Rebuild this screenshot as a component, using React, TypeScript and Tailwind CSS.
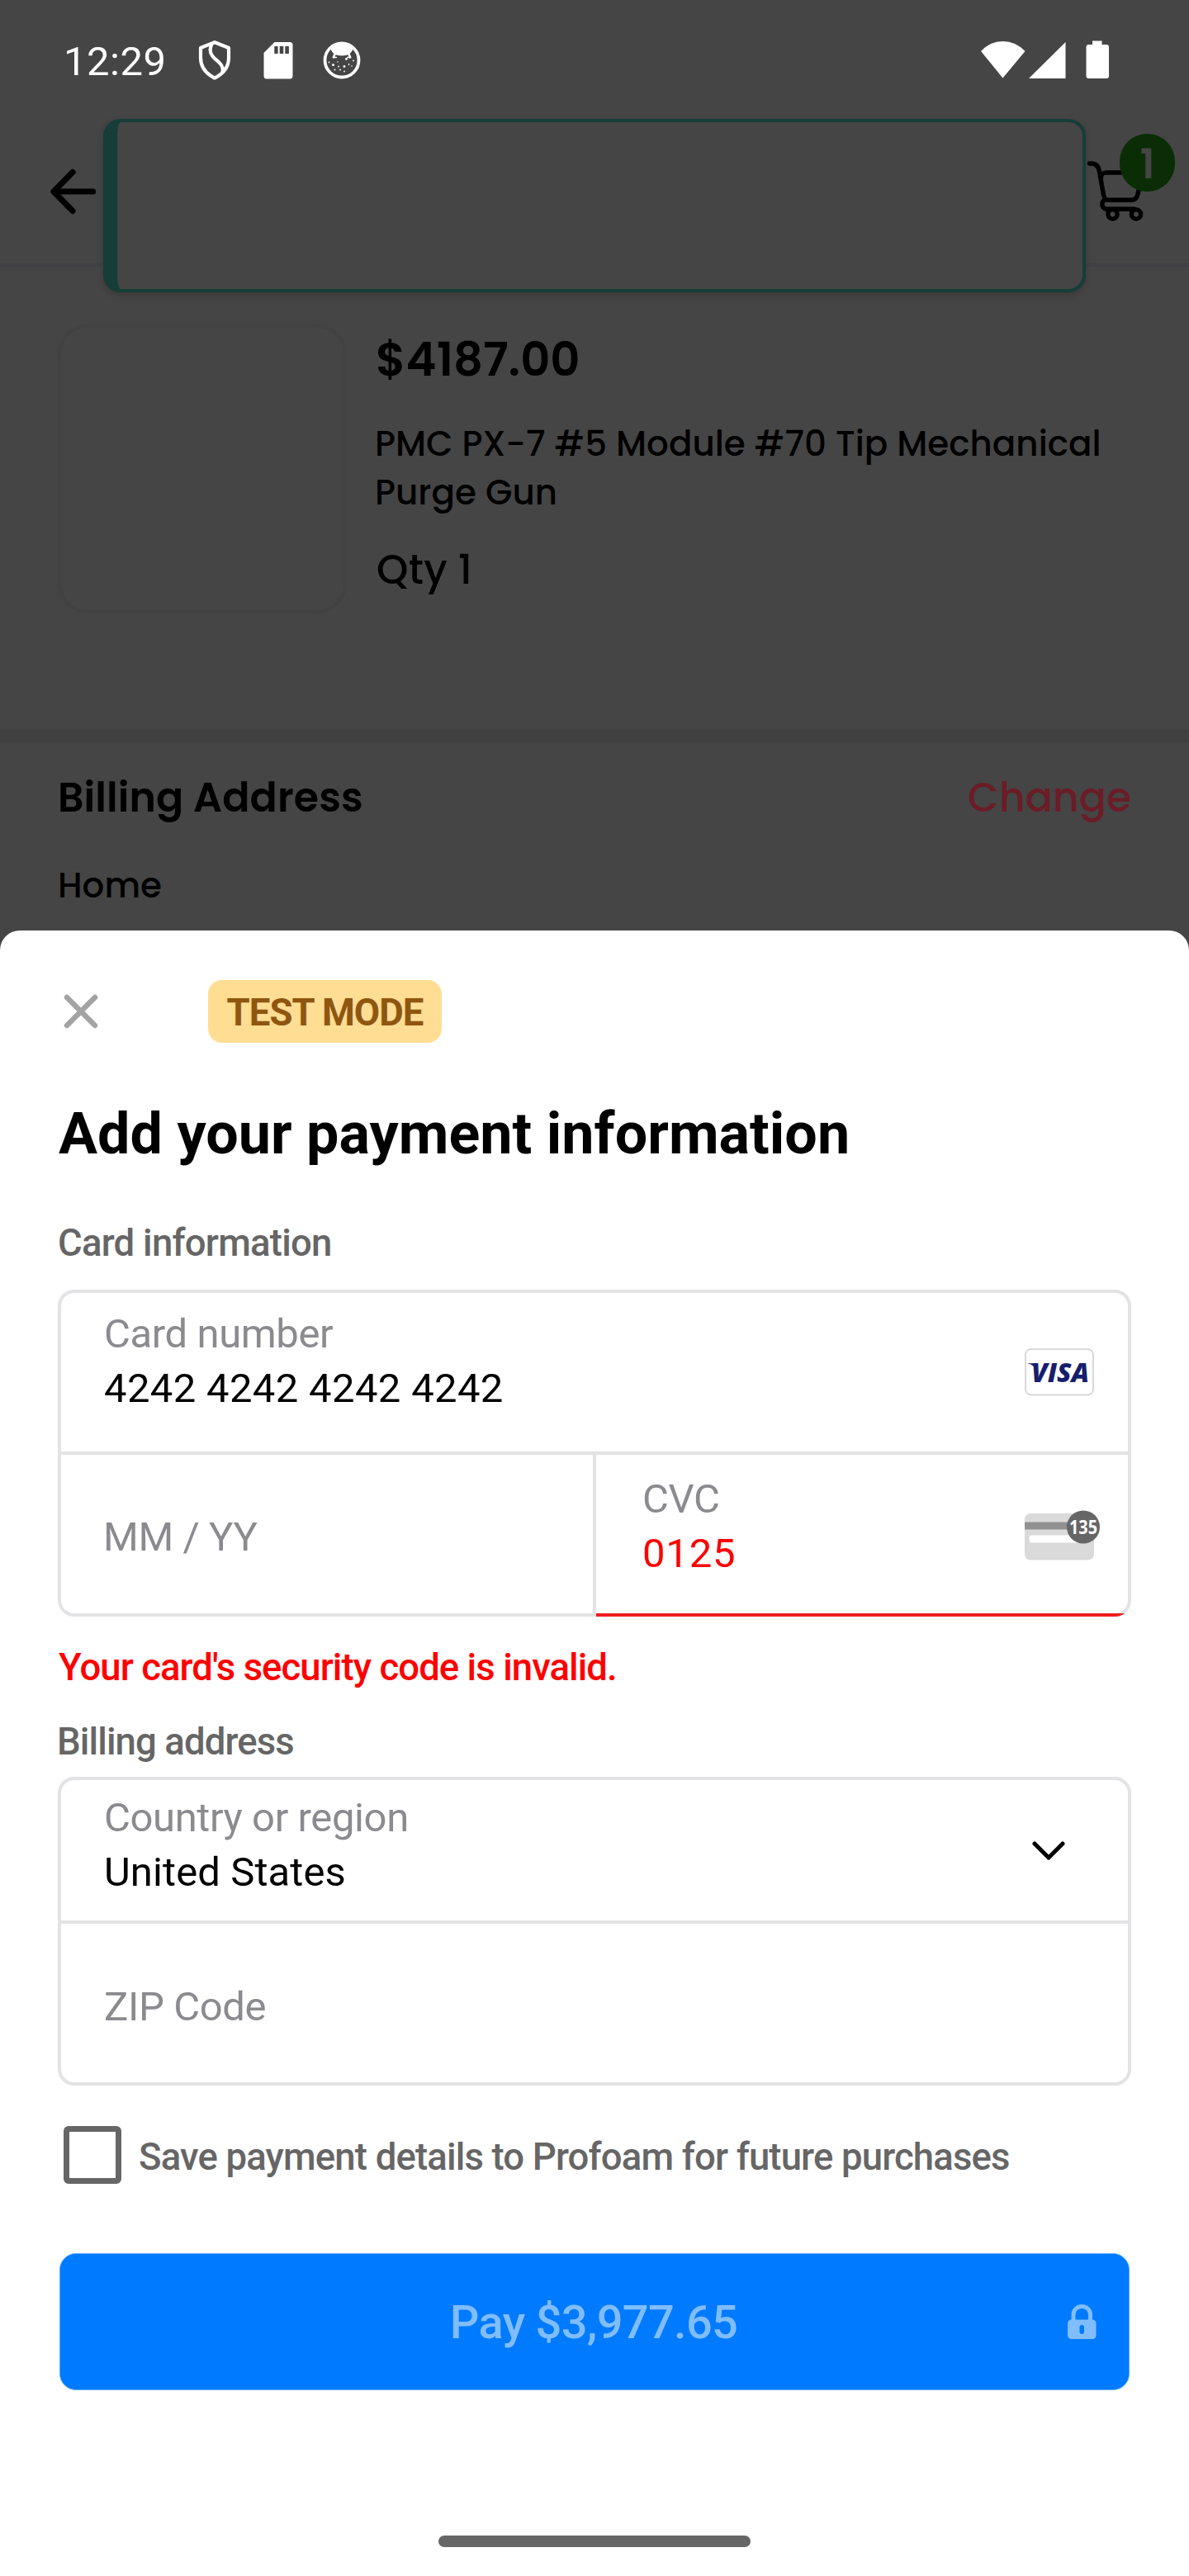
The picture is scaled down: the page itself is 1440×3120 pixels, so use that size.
import type { ReactNode } from "react";

function ShieldIcon() {
  return (
    <svg width="42" height="50" viewBox="0 0 42 50" fill="none" stroke="#fff" strokeWidth="4.2" strokeLinejoin="round" strokeLinecap="round">
      <path d="M21 3.2 L38 10 V22 C38 32 32 41 21 46.5 C10 41 4 32 4 22 V10 Z" />
      <path d="M17.500 5.500 C14 12 15 17 20.500 22.500 C27.500 28.500 32 32 30.500 39" />
    </svg>
  );
}

function SdCardIcon() {
  return (
    <svg width="36" height="46" viewBox="0 0 36 46">
      <path d="M13.500 1 H32 Q35.500 1 35.500 4.500 V42 Q35.500 45.500 32 45.500 H4 Q0.500 45.500 0.500 42 V14 Z" fill="#fff" />
      <path d="M13.300 6 h4.300 v9 h-4.300z M19.700 6 h4.600 v9 h-4.600z M26.300 6 h4.600 v9 h-4.600z" fill="#454545" />
    </svg>
  );
}

function FaceIcon() {
  return (
    <svg width="46" height="46" viewBox="0 0 46 46">
      <circle cx="23" cy="23" r="20.500" fill="none" stroke="#fff" strokeWidth="3.800" />
      <path d="M10 6 Q23 -2 36 6 V10.500 Q34 17 23 17.500 Q12 17 10 10.500 Z" fill="#fff" />
      <path d="M15.500 13 L12.500 20.500 M30.500 13 L33.500 20.500" stroke="#fff" strokeWidth="2.600" />
      <path d="M14 19.500 L17 19.500 M29 19.500 L32 19.500" stroke="#fff" strokeWidth="1.400" />
      <g fill="#fff">
        <circle cx="12.500" cy="28.500" r="1.500" />
        <circle cx="18" cy="25" r="0.800" />
        <circle cx="28.500" cy="21.500" r="1.400" />
        <circle cx="26" cy="30.500" r="1.400" />
        <circle cx="19" cy="30.500" r="0.900" />
        <circle cx="31.500" cy="28" r="0.900" />
        <circle cx="37" cy="23.500" r="0.900" />
        <circle cx="7.500" cy="25.500" r="0.900" />
        <circle cx="35" cy="30" r="0.800" />
        <circle cx="14.500" cy="34.500" r="0.900" />
        <circle cx="21" cy="34.500" r="0.900" />
        <circle cx="26" cy="36.500" r="0.900" />
      </g>
    </svg>
  );
}

function StatusBar() {
  return (
    <div className="flex h-[146px] items-center pl-[78px] pr-[97px] text-white">
      <span className="relative -left-px top-px w-[161px] text-[49px] leading-none tracking-[0.5px]">12:29</span>
      <ShieldIcon />
      <span className="ml-[38px]"><SdCardIcon /></span>
      <span className="ml-[36px]"><FaceIcon /></span>
      <svg className="ml-auto" width="155" height="48" viewBox="0 0 155 48" fill="#fff">
        <path d="M0 13 Q11 1 26.500 1 Q42 1 53.500 13 L26.500 45.500 Z" />
        <path d="M102.500 2 V46 H58 Z" />
        <path d="M135 0.500 h11.500 v4.500 H152 q3 0 3 3 V43 q0 3 -3 3 H130.500 q-3 0 -3 -3 V8 q0 -3 3 -3 H135 Z" />
      </svg>
    </div>
  );
}

function AppHeader() {
  return (
    <div className="relative flex h-[177px] border-b-4 border-[#414144]">
      <svg className="ml-[60px] mt-[58px]" width="58" height="56" viewBox="0 0 58 56" fill="none" stroke="#000" strokeWidth="7.200" strokeLinecap="round" strokeLinejoin="round">
        <path d="M52.500 28 H5.500 M28 4.500 L5 28 L28 51.500" />
      </svg>
      <svg className="ml-auto mr-[40px] mt-[44px]" width="88" height="82" viewBox="0 0 88 82" fill="none" stroke="#000" strokeWidth="5.400" strokeLinecap="round" strokeLinejoin="round">
        <path d="M7.500 8 H9.500 C15 8 18.500 11 19.500 18 L24.500 46 C25.500 50.500 27.500 52.300 30 52.300 H58 C62.500 52.300 65 50 66 45 L71 24 C72 21 71 19 67 19 H28 C23.500 19 21 21.500 21.500 26" />
        <path d="M26 52.300 C21.500 54 21.500 62 28 63.300 H62" />
        <circle cx="35.500" cy="69.500" r="5.600" />
        <circle cx="64" cy="69.500" r="5.600" />
      </svg>
      <div className="absolute left-[1356px] top-[16px] flex h-[70px] w-[67px] items-center justify-center rounded-full bg-[#0a2d05] pt-[5px]">
        <span className="font-['Poppins','Inter',sans-serif] text-[49px] font-semibold leading-none text-[#454545]">1</span>
      </div>
      <div className="absolute -top-[2px] left-[125px] h-[210px] w-[1190px] rounded-[21px] border-4 border-l-[17px] border-[#163d37] bg-[#454545] shadow-[0_3px_9px_rgba(0,0,0,0.2)]" />
    </div>
  );
}

function Product() {
  return (
    <div className="flex h-[560px] items-start gap-[37px] pl-[70px] pt-[70px]">
      <div className="h-[350px] w-[350px] rounded-[36px] border-4 border-[#424242]" />
      <div className="pt-[8px] font-['Poppins','Inter',sans-serif]">
        <p className="-ml-[2px] text-[56px] font-semibold leading-[70px]">$4187.00</p>
        <p className="-ml-[3px] mt-[37px] whitespace-nowrap text-[42px] font-medium leading-[59px] tracking-[0.04px]">
          PMC PX-7 #5 Module #70 Tip Mechanical
          <br />
          Purge Gun
        </p>
        <p className="-ml-px mt-[31px] text-[49px] font-medium leading-[66px] tracking-[0.2px]">Qty 1</p>
      </div>
    </div>
  );
}

function Billing() {
  return (
    <div className="border-t-[17px] border-[#404040] px-[70px] pt-[33px] font-['Poppins','Inter',sans-serif]">
      <div className="flex justify-between text-[49px] leading-[66px]">
        <h2 className="font-semibold tracking-[0.1px]">Billing Address</h2>
        <span className="font-medium text-[#6b1c27]">Change</span>
      </div>
      <p className="mt-[44px] text-[42px] font-medium leading-[60px]">Home</p>
    </div>
  );
}

function Field({ label, value, tone = "text-black", tracking = "tracking-[0.35px]", className = "", children }: {
  label: string; value?: string; tone?: string; tracking?: string; className?: string; children?: ReactNode;
}) {
  return (
    <div className={`flex text-[49px] leading-[66px] ${className}`}>
      <div className="grow">
        <p className="tracking-[-0.4px] text-[#8a8a8f]">{label}</p>
        {value && <p className={`${tone} ${tracking}`}>{value}</p>}
      </div>
      {children}
    </div>
  );
}

function VisaIcon() {
  return (
    <svg width="84" height="58" viewBox="0 0 84 58">
      <rect x="1" y="1" width="82" height="55.500" rx="7" fill="#fff" stroke="#cfcfcf" strokeWidth="1.600" />
      <path d="M3 18.300 H13 L17 30 Q12 20 3 18.300 Z" fill="#171e6c" />
      <text x="8" y="40.800" fill="#171e6c" fontFamily="'Open Sans', sans-serif" fontWeight="800" fontStyle="italic" fontSize="31.500" textLength="70" lengthAdjust="spacingAndGlyphs">VISA</text>
    </svg>
  );
}

function CvcIcon() {
  return (
    <svg width="92" height="62" viewBox="0 0 92 62">
      <rect x="0" y="4" width="84" height="56.500" rx="7" fill="#dadada" />
      <rect x="0" y="14.500" width="84" height="9" fill="#919191" />
      <rect x="5.700" y="30.500" width="70" height="9" rx="3" fill="#fff" />
      <circle cx="71" cy="20.500" r="20" fill="#666" />
      <text x="54" y="29" fill="#fff" fontFamily="'Noto Sans', sans-serif" fontWeight="700" fontSize="23.500" textLength="34" lengthAdjust="spacingAndGlyphs">135</text>
    </svg>
  );
}

function PaymentSheet() {
  return (
    <div className="-mt-[26px] h-[1993px] rounded-t-[24px] bg-white px-[70px] pt-[60px]">
      <div className="flex h-[76px] items-center pl-[7px]">
        <svg width="42" height="42" viewBox="0 0 42 42" stroke="#a3a3a3" strokeWidth="6.500" strokeLinecap="round">
          <path d="M4 4 L38 38 M38 4 L4 38" />
        </svg>
        <span className="ml-[133px] flex h-[76px] w-[283px] items-center justify-center rounded-[17px] bg-[#ffdd93] pt-[5px] text-[45.5px] font-bold tracking-[-0.95px] text-[#8f5610]">TEST MODE</span>
      </div>
      <h1 className="ml-px mt-[70px] text-[70px] font-bold leading-[80px] tracking-[0.04px]">Add your payment information</h1>
      <p className="mt-[63px] text-[45.5px] font-medium leading-[60px] tracking-[-0.76px] text-[#666]">Card information</p>

      <div className="relative mt-[26px] h-[396px] w-[1300px] rounded-[20px] border-4 border-[#e3e3e5]">
        <Field label="Card number" value="4242 4242 4242 4242" className="h-[192px] pl-[52px] pt-[17px]">
          <span className="mr-[41px] mt-[50px]"><VisaIcon /></span>
        </Field>
        <div className="flex h-[196px] border-t-4 border-[#e3e3e5]">
          <Field label="MM / YY" className="w-[648px] border-r-4 border-[#e3e3e5] pl-[51px] pt-[67px]" />
          <Field label="CVC" value="0125" tone="text-[#f00]" tracking="tracking-[0.8px]" className="grow pl-[56px] pt-[21px]">
            <span className="mr-[33px] mt-[46px]"><CvcIcon /></span>
          </Field>
        </div>
        {/* Error underline, clipped to the card's rounded corner */}
        <div className="absolute -inset-1 overflow-hidden rounded-[20px]">
          <div className="absolute bottom-0 left-[652px] right-0 h-[4px] bg-[#ee1c1c]" />
        </div>
      </div>

      <p className="ml-px mt-[32px] text-[45.5px] font-medium leading-[60px] tracking-[-0.94px] text-[#f00]">Your card's security code is invalid.</p>
      <p className="-ml-px mt-[30px] text-[45.5px] font-medium leading-[60px] tracking-[-0.9px] text-[#666]">Billing address</p>

      <div className="mt-[12px] h-[374px] w-[1300px] rounded-[20px] border-4 border-[#e3e3e5]">
        <Field label="Country or region" value="United States" tracking="tracking-[0.1px]" className="h-[170px] pl-[52px] pt-[13px]">
          <svg className="mr-[76px] mt-[61px]" width="40" height="24" viewBox="0 0 40 24" fill="none" stroke="#000" strokeWidth="5" strokeLinecap="round" strokeLinejoin="round">
            <path d="M3 3 L20 20 L37 3" />
          </svg>
        </Field>
        <Field label="ZIP Code" className="h-[196px] border-t-4 border-[#e3e3e5] pl-[52px] pt-[68px]" />
      </div>

      <div className="mt-[49px] flex h-[70px] items-center gap-[21px] pl-[7px]">
        <span className="h-[70px] w-[70px] rounded-[6px] border-[7px] border-[#666]" />
        <span className="mt-[6px] whitespace-nowrap text-[45.5px] font-medium leading-[60px] tracking-[-0.84px] text-[#666]">Save payment details to Profoam for future purchases</span>
      </div>

      <button className="ml-[2px] mt-[84px] grid h-[166px] w-[1296px] grid-cols-[1fr_auto_1fr] items-center rounded-[20px] border border-[#5babff] bg-[#007aff] pr-[39px] text-[56px] font-medium text-[#80bdff]">
        <span className="col-start-2 pl-[37px] pt-[2px] leading-[70px] tracking-[-0.7px]">Pay $3,977.65</span>
        <svg className="justify-self-end" width="35" height="42" viewBox="0 0 35 42">
          <path d="M7 20 V12.500 C7 -0.700 27.500 -0.700 27.500 12.500 V20" fill="none" stroke="#80bdff" strokeWidth="5" />
          <rect x="0" y="18.500" width="34.500" height="23.500" rx="4.500" fill="#80bdff" />
          <rect x="14.500" y="25" width="5.500" height="11" rx="2.700" fill="#007aff" />
        </svg>
      </button>
      <div className="mx-auto mt-[176px] h-[14px] w-[378px] rounded-full bg-[#666]" />
    </div>
  );
}

export default function App() {
  return (
    <div className="h-[3120px] w-[1440px] overflow-hidden bg-white font-['Roboto',sans-serif] text-black">
      <div className="h-[1153px] bg-[#454545]">
        <StatusBar />
        <AppHeader />
        <Product />
        <Billing />
      </div>
      <PaymentSheet />
    </div>
  );
}
